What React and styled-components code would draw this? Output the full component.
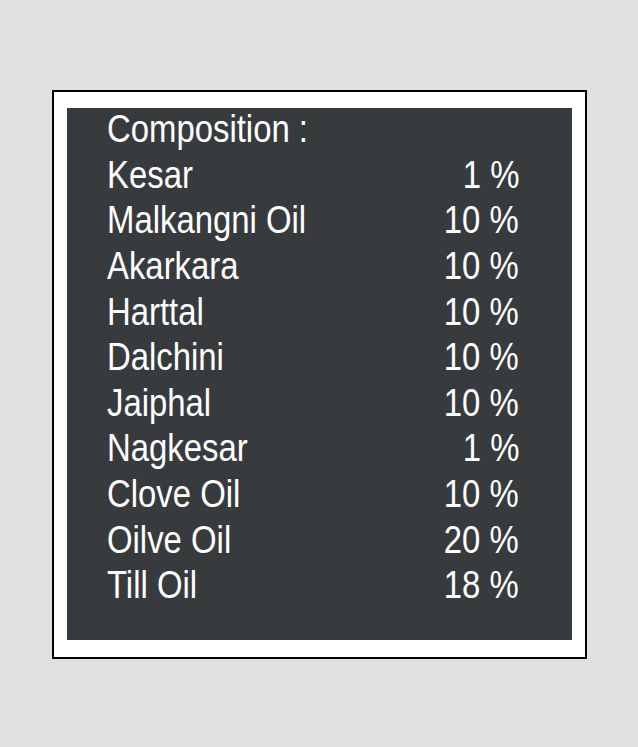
import React from "react";
import styled, { createGlobalStyle } from "styled-components";

const Global = createGlobalStyle`
  html, body { margin: 0; padding: 0; background: #e0e0e0; }
  body { width: 638px; height: 747px; overflow: hidden; }
`;

const Page = styled.div`
  width: 638px;
  height: 747px;
  box-sizing: border-box;
  padding: 90px 0 0 52px;
  background: #e0e0e0;
`;

const Frame = styled.div`
  width: 535px;
  height: 569px;
  box-sizing: border-box;
  border: 2px solid #000;
  background: #fff;
  padding: 16px 13px 17px 13px;
  display: flex;
`;

const Panel = styled.div`
  flex: 1;
  background: #383b3d;
  box-sizing: border-box;
  padding: 0 53px 0 40px;
  font-family: "Liberation Sans", Arial, sans-serif;
  font-size: 38px;
  line-height: 45.6px;
  color: #fff;
`;

const Row = styled.div`
  display: flex;
  justify-content: space-between;
  margin-top: ${(p) => (p.$first ? "-0.8px" : "0")};
`;

const Text = styled.span`
  display: inline-block;
  white-space: nowrap;
  transform: scaleX(0.865);
  transform-origin: ${(p) => (p.$right ? "right" : "left")} center;
`;

const items = [
  ["Kesar", "1 %"],
  ["Malkangni Oil", "10 %"],
  ["Akarkara", "10 %"],
  ["Harttal", "10 %"],
  ["Dalchini", "10 %"],
  ["Jaiphal", "10 %"],
  ["Nagkesar", "1 %"],
  ["Clove Oil", "10 %"],
  ["Oilve Oil", "20 %"],
  ["Till Oil", "18 %"],
];

export default function App() {
  return (
    <>
      <Global />
      <Page>
        <Frame>
          <Panel>
            <Row $first>
              <Text>Composition :</Text>
            </Row>
            {items.map(([name, amt]) => (
              <Row key={name}>
                <Text>{name}</Text>
                <Text $right>{amt}</Text>
              </Row>
            ))}
          </Panel>
        </Frame>
      </Page>
    </>
  );
}
